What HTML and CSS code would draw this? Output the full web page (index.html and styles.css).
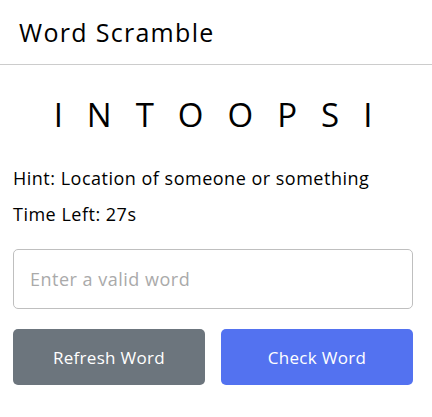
FILE: index.html
```html
<!DOCTYPE html>
<html lang="en">
<head>
<meta charset="utf-8">
<title>Word Scramble</title>
<link rel="stylesheet" href="styles.css">
</head>
<body>
<div class="container">
  <h2 class="title">Word Scramble</h2>
  <div class="content">
    <p class="word">intoopsi</p>
    <div class="details">
      <p class="hint">Hint: <span>Location of someone or something</span></p>
      <p class="time">Time Left: <span><b>27</b>s</span></p>
    </div>
    <input class="field" type="text" spellcheck="false" placeholder="Enter a valid word">
    <div class="buttons">
      <button class="btn refresh-word">Refresh Word</button>
      <button class="btn check-word">Check Word</button>
    </div>
  </div>
</div>
</body>
</html>
```
FILE: styles.css
```css
* {
  margin: 0;
  padding: 0;
  box-sizing: border-box;
}
body {
  background: #fff;
  font-family: "Open Sans", "DejaVu Sans", sans-serif;
  color: #000;
}
.container {
  width: 432px;
  background: #fff;
}
.title {
  font-size: 25px;
  font-weight: 500;
  line-height: 32px;
  letter-spacing: 1.3px;
  padding: 16px 19px;
  border-bottom: 1px solid #ccc;
}
.content {
  padding: 26px 19px 0 13px;
}
.word {
  font-size: 33px;
  font-weight: 400;
  line-height: 48px;
  text-align: center;
  letter-spacing: 24px;
  margin-right: -24px;
  text-transform: uppercase;
}
.details {
  margin: 26px 0 22px;
}
.details p {
  font-size: 18px;
  line-height: 26px;
  letter-spacing: 0.5px;
  margin-bottom: 10px;
}
.details b {
  font-weight: 500;
}
.field {
  display: block;
  width: 100%;
  height: 60px;
  outline: none;
  font-family: inherit;
  font-size: 18px;
  letter-spacing: 0.5px;
  padding: 0 16px;
  border-radius: 5px;
  border: 1px solid #bfbfbf;
  color: #000;
}
.field::placeholder {
  color: #aaa;
}
.buttons {
  display: flex;
  justify-content: space-between;
  gap: 16px;
  margin-top: 20px;
}
.btn {
  flex: 1;
  border: none;
  padding: 15px 0;
  height: 56px;
  color: #fff;
  font-family: inherit;
  font-size: 17px;
  letter-spacing: 0.3px;
  border-radius: 5px;
}
.refresh-word {
  background: #6c757d;
}
.check-word {
  background: #5372f0;
}
```
